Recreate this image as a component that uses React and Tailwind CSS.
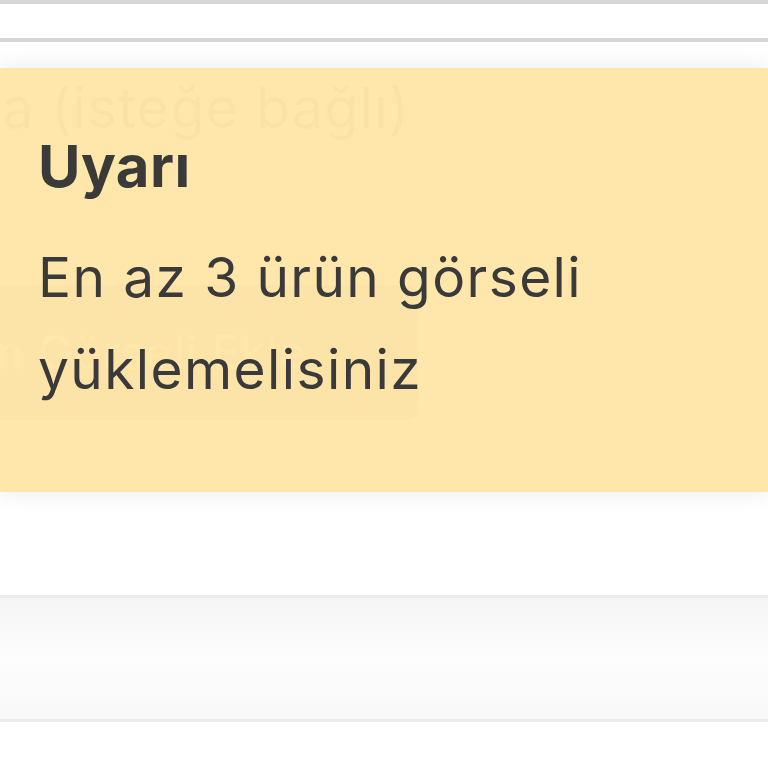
import React from "react";

const font = { fontFamily: "Inter, 'Noto Sans', sans-serif" };

const Toast = ({ title, message }) => {
  return (
    <div
      className="absolute left-0 right-0 top-[68px] h-[424px] bg-[#ffe6a7]/95 shadow-[0_0_22px_rgba(0,0,0,0.09)] pl-[38px] pr-[30px] pt-[63px]"
      style={font}
    >
      <h2 className="text-[58px] leading-[70px] font-bold text-[#3a3a3a] tracking-[0.5px]">
        {title}
      </h2>
      <p className="mt-[30px] text-[55px] leading-[92px] text-[#3a3a3a] tracking-[1.4px]">
        {message}
      </p>
    </div>
  );
};

const App = () => {
  return (
    <div className="relative w-[768px] h-[768px] overflow-hidden bg-white" style={font}>
      {/* top bar remains */}
      <div className="border-t-4 border-b-4 border-[#d6d6d6] h-[42px] bg-white" />

      {/* form area behind the toast */}
      <div className="h-[553px] bg-white flex flex-col">
        <div className="pt-[34px] h-[205px] border-b border-[#e6e6e6]">
          <span className="block text-[56px] leading-[64px] text-[#a3a3a3] pl-[2px] tracking-[1px]">
            a (isteğe bağlı)
          </span>
        </div>
        <div className="pt-[38px]">
          <div className="w-[418px] h-[135px] rounded-r-[10px] bg-[#c9c3b8] flex items-center">
            <span className="text-[46px] text-[#ffffff] -ml-[4px] tracking-[1px]">
              n Görseli Ekle
            </span>
          </div>
        </div>
      </div>

      {/* lower section */}
      <div className="h-[127px] border-t-[3px] border-b-[3px] border-[#ececec] bg-gradient-to-b from-[#f5f5f5] via-[#fdfdfd] to-[#f8f8f8]" />

      <Toast title="Uyarı" message="En az 3 ürün görseli yüklemelisiniz" />
    </div>
  );
};

export default App;
